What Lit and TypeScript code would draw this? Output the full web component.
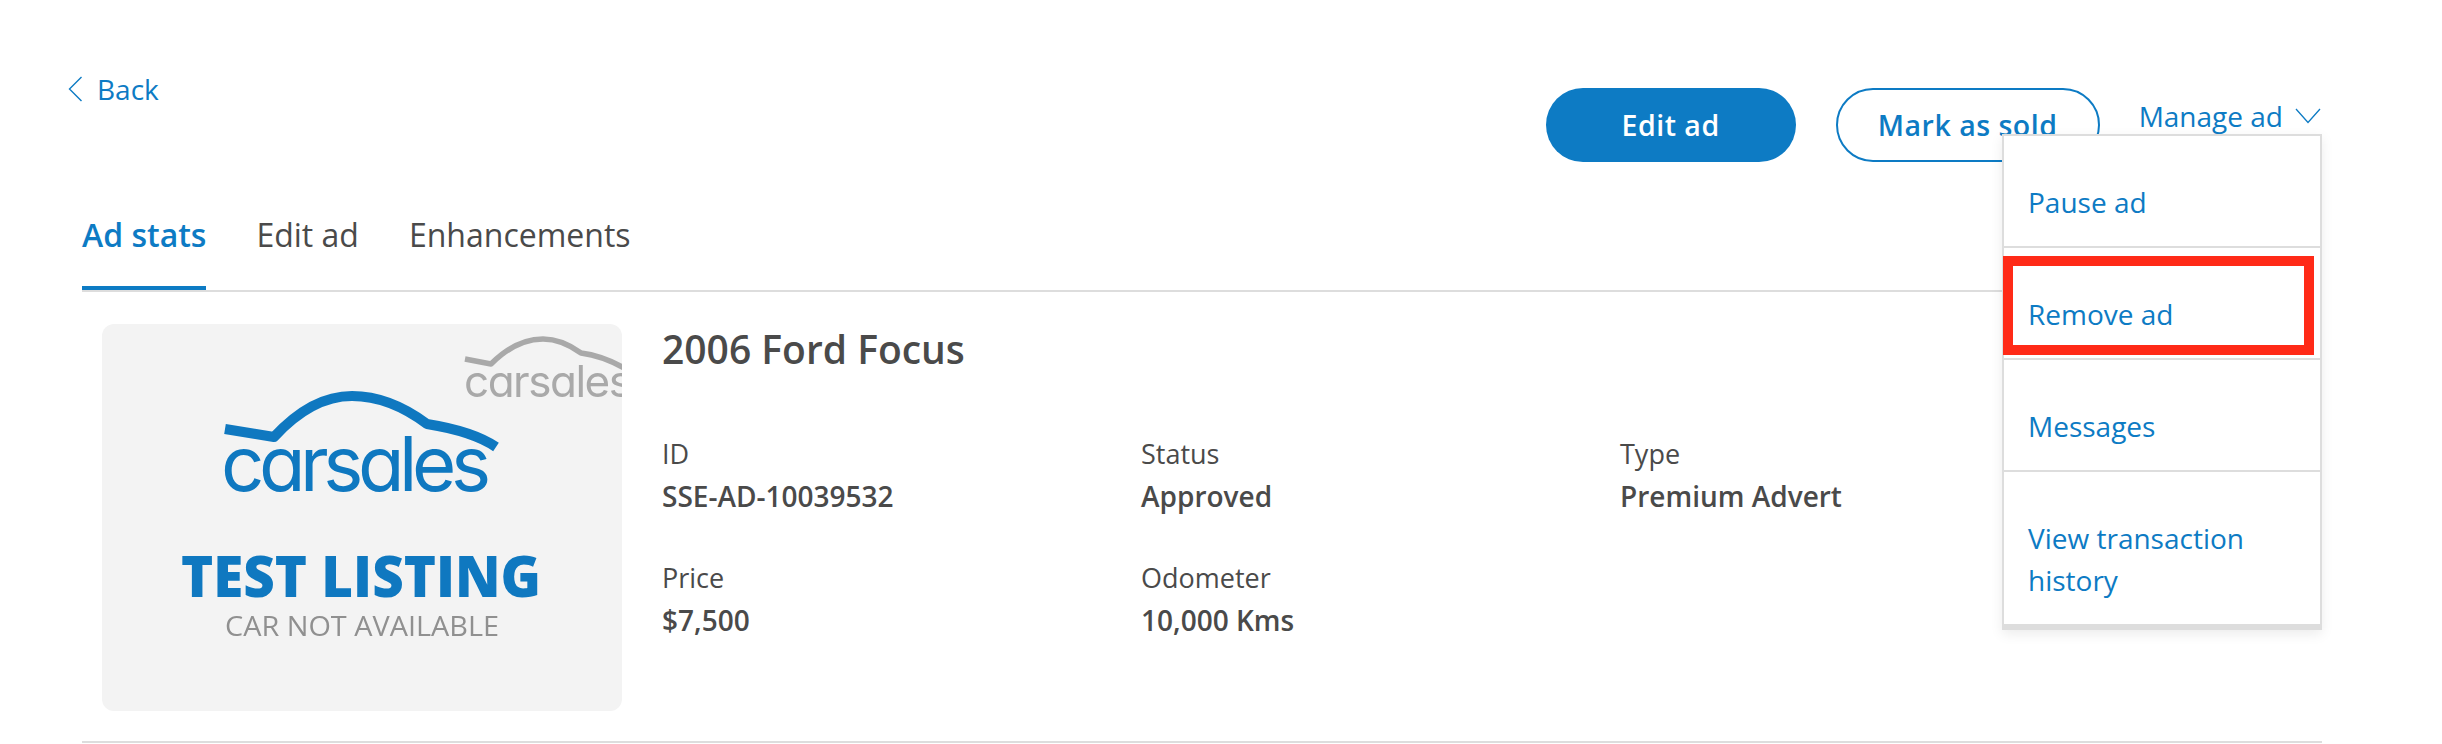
import { LitElement, html, css, svg } from "lit";
import { customElement } from "lit/decorators.js";

const swoosh = (d: string, c: string, w: number) =>
  svg`<path d=${d} fill="none" stroke=${c} stroke-width=${w} stroke-linejoin="round"/>`;

@customElement("app-root")
export class AppRoot extends LitElement {
  static styles = css`
    :host {
      display: block;
      height: 744px;
      overflow: hidden;
      background: #fff;
      font-family: "Open Sans", "Noto Sans", sans-serif;
      font-size: 27px;
      line-height: 42px;
      color: #4a4a4a;
    }
    .page { padding: 69px 120px 0 82px; }
    .top { display: flex; justify-content: space-between; align-items: flex-start; height: 93px; }
    a { color: #0d7bc4; text-decoration: none; }
    .back { display: flex; align-items: center; gap: 14px; margin: -1px 0 0 -14px; font-size: 28px; }
    .back svg { width: 15px; height: 26px; }
    .actions { display: flex; align-items: flex-start; }
    .btn {
      box-sizing: border-box;
      height: 74px;
      border-radius: 37px;
      display: flex;
      align-items: center;
      justify-content: center;
      font-size: 28.5px;
      font-weight: 600;
      letter-spacing: 0.5px;
      margin-top: 19px;
    }
    .primary { width: 250px; background: #0d7bc4; color: #fff; margin-right: 40px; }
    .outline { width: 264px; border: 2px solid #0d7bc4; color: #0d7bc4; margin-right: 39px; }
    .manage {
      position: relative;
      display: flex;
      align-items: center;
      gap: 12px;
      margin-top: 26px;
      padding-right: 1px;
      color: #0d7bc4;
      font-size: 28px;
    }
    .manage svg { width: 26px; height: 16px; }
    .menu {
      position: absolute;
      z-index: 2;
      top: 39px;
      right: 0;
      width: 320px;
      box-sizing: border-box;
      background: #fff;
      border: 2px solid #ddd;
      border-bottom-width: 4px;
      box-shadow: 0 4px 12px rgba(0, 0, 0, 0.08);
    }
    .item { padding: 45px 24px 23px; border-bottom: 2px solid #ddd; }
    .item:last-of-type { border-bottom: 0; }
    .mark {
      position: absolute;
      left: -1px;
      top: 120px;
      width: 311px;
      height: 99px;
      box-sizing: border-box;
      border: 10px solid #ff2a17;
    }
    .tabs {
      display: flex;
      gap: 50px;
      margin-top: 52px;
      border-bottom: 2px solid #ddd;
      height: 76px;
      font-size: 32px;
    }
    .tab { height: 76px; box-sizing: border-box; }
    .tab.active {
      color: #0d7bc4;
      font-weight: 600;
      border-bottom: 4px solid #0d7bc4;
    }
    .content {
      display: flex;
      gap: 40px;
      padding: 32px 0 30px 20px;
      border-bottom: 2px solid #ddd;
    }
    .thumb {
      flex: none;
      width: 520px;
      height: 387px;
      border-radius: 12px;
      background: #f3f3f3;
      overflow: hidden;
    }
    .thumb svg { display: block; width: 520px; height: 387px; filter: blur(0.5px); }
    .logo { font-family: "Inter", sans-serif; font-feature-settings: "cv11"; font-weight: 400; }
    .test { font-family: "Open Sans", sans-serif; font-weight: 800; }
    .sub { font-family: "Open Sans", sans-serif; }
    h1 {
      margin: 0;
      font-size: 39px;
      font-weight: 600;
      line-height: 50px;
    }
    .grid {
      display: grid;
      grid-template-columns: 479px 479px 1fr;
      row-gap: 40px;
      margin-top: 59px;
    }
    .grid b { display: block; font-weight: 600; font-size: 28px; }
    .menu, .menu a { font-size: 28px; }
  `;

  render() {
    const fields = [
      ["ID", "SSE-AD-10039532"],
      ["Status", "Approved"],
      ["Type", "Premium Advert"],
      ["Price", "$7,500"],
      ["Odometer", "10,000 Kms"],
    ];
    return html`
      <div class="page">
        <div class="top">
          <a class="back">
            <svg viewBox="0 0 15 26"><path d="M13.5 1 L1.5 13 L13.5 25" fill="none" stroke="#0d7bc4" stroke-width="1.4"/></svg>
            <span>Back</span>
          </a>
          <div class="actions">
            <div class="btn primary">Edit ad</div>
            <div class="btn outline">Mark as sold</div>
            <div class="manage">
              <span>Manage ad</span>
              <svg viewBox="0 0 26 16"><path d="M1 1 L13 14.5 L25 1" fill="none" stroke="#0d7bc4" stroke-width="1.3"/></svg>
              <div class="menu">
                <div class="item"><a>Pause ad</a></div>
                <div class="item"><a>Remove ad</a></div>
                <div class="item"><a>Messages</a></div>
                <div class="item"><a>View transaction history</a></div>
                <div class="mark"></div>
              </div>
            </div>
          </div>
        </div>
        <div class="tabs">
          <div class="tab active">Ad stats</div>
          <div class="tab">Edit ad</div>
          <div class="tab">Enhancements</div>
        </div>
        <div class="content">
          <div class="thumb">
            <svg viewBox="0 0 520 387">
              ${swoosh("M363 35 L389 40 C405 24 422 15 441 15 C456 15 468 21 479 29 C494 31 508 36 522 44", "#a9a9a9", 5.5)}
              <text class="logo" x="362" y="73" font-size="44" fill="#a9a9a9" textLength="168" lengthAdjust="spacing">carsales</text>
              ${swoosh("M123 105 L172 113 C195 88 222 72 250 72 C 280 72 305 85 325 100 C 350 104 375 110 394 123", "#0f78c0", 10)}
              <text class="logo" x="119" y="167" font-size="76" fill="#0f78c0" textLength="270" lengthAdjust="spacing">carsales</text>
              <text class="test" x="79" y="273" font-size="56" fill="#0f78c0" textLength="360" lengthAdjust="spacingAndGlyphs">TEST LISTING</text>
              <text class="sub" x="123" y="312" font-size="28" fill="#909090" textLength="274" lengthAdjust="spacingAndGlyphs">CAR NOT AVAILABLE</text>
            </svg>
          </div>
          <div class="info">
            <h1>2006 Ford Focus</h1>
            <div class="grid">
              ${fields.map(([k, v]) => html`<div>${k}<b>${v}</b></div>`)}
            </div>
          </div>
        </div>
      </div>
    `;
  }
}
